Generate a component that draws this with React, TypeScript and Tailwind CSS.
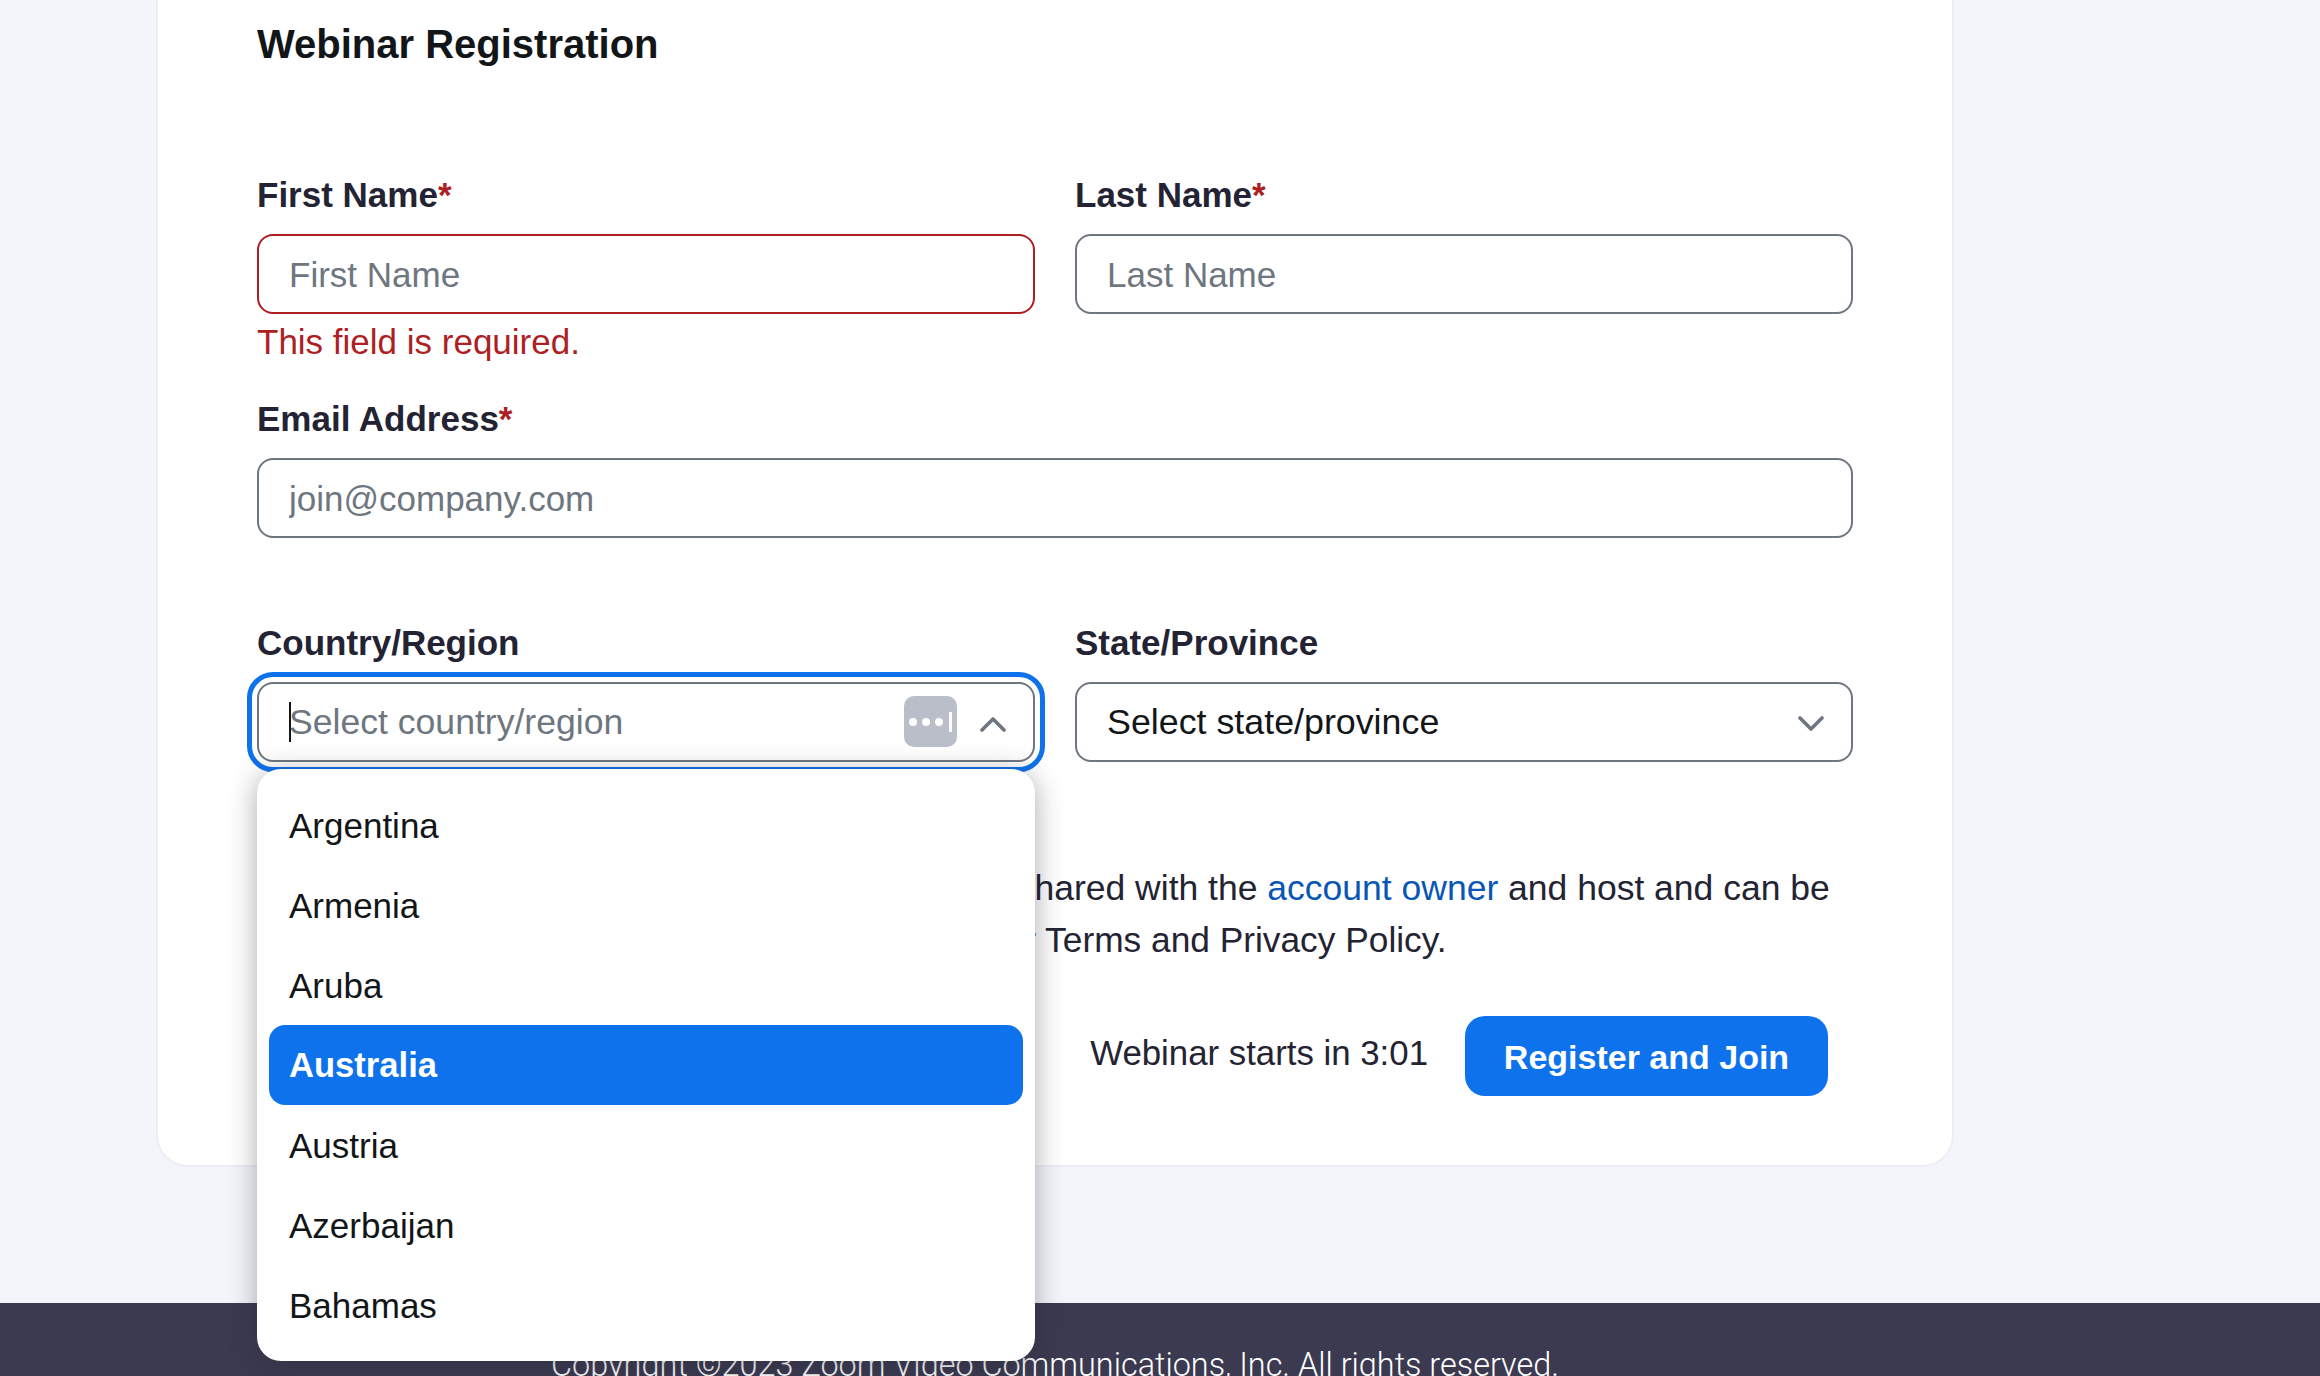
const countries = ["Argentina", "Armenia", "Aruba", "Australia", "Austria", "Azerbaijan", "Bahamas"];

function Label({ text, required }: { text: string; required?: boolean }) {
  return (
    <label className="block h-[40px] mb-[20px] pt-[1px] text-[35px] leading-[40px] font-bold text-[#232333]">
      {text}
      {required && <span className="text-[#ae1f23]">*</span>}
    </label>
  );
}

function TextField({ placeholder, error }: { placeholder: string; error?: boolean }) {
  return (
    <input
      placeholder={placeholder}
      className={`block w-full h-[80px] rounded-[16px] border-2 bg-white pl-[30px] pt-[2px] text-[35px] outline-none placeholder:text-[#6e7680] ${
        error ? "border-[#ae1f23]" : "border-[#6e7680]"
      }`}
    />
  );
}

function Chevron({ up }: { up?: boolean }) {
  return (
    <svg className="mt-[3px]" width="26" height="16" viewBox="0 0 26 16" fill="none" stroke="#6e7680" strokeWidth="3.6" strokeLinecap="round" strokeLinejoin="round">
      <path d={up ? "M2 14 L13 3 L24 14" : "M2 2 L13 13 L24 2"} />
    </svg>
  );
}

function CountrySelect() {
  return (
    <div className="relative">
      <div className="absolute -inset-[10px] rounded-[26px] border-[5px] border-[#0e72ed]" />
      <div className="relative flex items-center h-[80px] rounded-[16px] border-2 border-[#6e7680] bg-white pl-[30px] pr-[27px]">
        <span className="absolute left-[30px] top-[18px] w-[2px] h-[40px] bg-[#131619]" />
        <span className="flex-1 pt-[2px] text-[35.6px] text-[#6e7680]">Select country/region</span>
        <div className="flex items-center justify-center gap-[5px] w-[53px] h-[51px] -mt-[1px] rounded-[10px] bg-[#b9bec9] mr-[23px]">
          <span className="w-[8px] h-[8px] rounded-full bg-white" />
          <span className="w-[8px] h-[8px] rounded-full bg-white" />
          <span className="w-[8px] h-[8px] rounded-full bg-white" />
          <span className="w-[3px] h-[20px] ml-[1px] bg-white" />
        </div>
        <Chevron up />
      </div>
      <ul className="absolute z-10 left-0 right-0 top-[87px] py-[16px] px-[12px] rounded-[24px] bg-white shadow-[0_4px_28px_rgba(35,35,51,0.38)]">
        {countries.map((c) => (
          <li
            key={c}
            className={`flex items-center h-[80px] pl-[20px] pt-[2px] rounded-[16px] ${
              c === "Australia" ? "bg-[#0e72ed] text-[34.6px] text-white font-bold" : "text-[35px] text-[#131619]"
            }`}
          >
            {c}
          </li>
        ))}
      </ul>
    </div>
  );
}

export default function App() {
  return (
    <div className="flex flex-col h-[1376px] overflow-hidden bg-[#f4f5fa] font-['Liberation_Sans',Arial,sans-serif]">
      <main className="ml-[156px] w-[1798px] h-[1167px] shrink-0 rounded-b-[32px] border-2 border-t-0 border-[#ededf4] bg-white px-[99px] pt-[20px]">
        <h1 className="h-[48px] text-[40px] leading-[48px] font-bold text-[#131619]">Webinar Registration</h1>

        <div className="grid grid-cols-2 gap-x-[40px] mt-[106px]">
          <div>
            <Label text="First Name" required />
            <TextField placeholder="First Name" error />
            <p className="mt-[6px] h-[44px] text-[35px] leading-[44px] text-[#ae1f23]">This field is required.</p>
          </div>
          <div>
            <Label text="Last Name" required />
            <TextField placeholder="Last Name" />
          </div>
        </div>

        <div className="mt-[34px]">
          <Label text="Email Address" required />
          <TextField placeholder="join@company.com" />
        </div>

        <div className="grid grid-cols-2 gap-x-[40px] mt-[84px]">
          <div>
            <Label text="Country/Region" />
            <CountrySelect />
          </div>
          <div>
            <Label text="State/Province" />
            <div className="flex items-center justify-between h-[80px] rounded-[16px] border-2 border-[#6e7680] bg-white pl-[30px] pr-[27px]">
              <span className="pt-[2px] text-[35.8px] text-[#131619]">Select state/province</span>
              <Chevron />
            </div>
          </div>
        </div>

        <p className="mt-[100px] text-[35.5px] leading-[52px] text-[#232333]">
          Information you provide when registering will be shared with the <a className="text-[#0956b5]">account owner</a> and host and can be
          <br />
          <span className="text-[35.3px]">used and shared by them in accordance with their Terms and Privacy Policy.</span>
        </p>

        <div className="flex items-center justify-end gap-[37px] mt-[50px] pr-[25px]">
          <span className="pb-[6px] text-[34.8px] text-[#232333]">Webinar starts in 3:01</span>
          <button className="h-[80px] w-[363px] rounded-[20px] bg-[#0e72ed] pt-[2px] text-[34px] font-bold text-white">Register and Join</button>
        </div>
      </main>

      <footer className="mt-[136px] h-[73px] shrink-0 overflow-hidden bg-[#3c3a50]">
        <p className="w-[2110px] pt-[40px] text-center font-['Roboto',sans-serif] text-[32.4px] font-light leading-[44px] text-white">
          Copyright ©2023 Zoom Video Communications, Inc. All rights reserved.
        </p>
      </footer>
    </div>
  );
}
